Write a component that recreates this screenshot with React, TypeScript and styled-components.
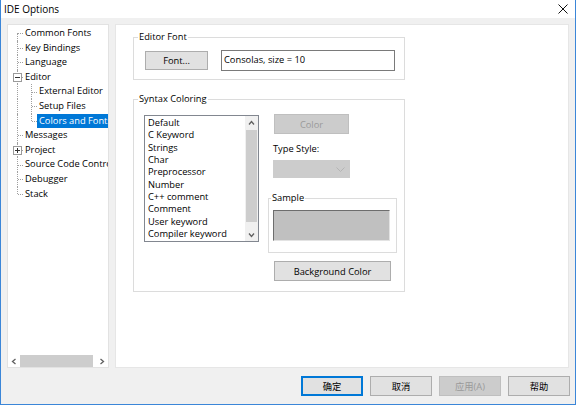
import React from 'react';
import styled, { createGlobalStyle } from 'styled-components';

const GlobalStyle = createGlobalStyle`
  html, body {
    margin: 0;
    padding: 0;
    background: #fff;
  }
  body {
    font-family: "Open Sans", "Noto Sans CJK SC", sans-serif;
    font-size: 9.3px;
    color: #000;
  }
  * {
    box-sizing: border-box;
  }
`;

const Window = styled.div`
  width: 576px;
  height: 405px;
  display: flex;
  flex-direction: column;
  border: 1px solid #3b86d8;
  border-top: 0;
  background: #f0f0f0;
`;

const TitleBar = styled.div`
  height: 18px;
  flex: none;
  display: flex;
  align-items: center;
  justify-content: space-between;
  padding: 0 7px 0 3px;
  background: #fff;
  font-size: 10px;
`;

const Body = styled.div`
  flex: 1;
  display: flex;
  flex-direction: column;
  padding: 6px 5px 0 6px;
`;

const Main = styled.div`
  display: grid;
  grid-template-columns: 102px 454px;
  column-gap: 6px;
  height: 344px;
`;

/* ---------- tree ---------- */

const Tree = styled.div`
  background: #fff;
  border: 1px solid #e2e2e2;
  display: flex;
  flex-direction: column;
  overflow: hidden;
`;

const TreeRows = styled.div`
  flex: 1;
  padding-top: 1px;
  overflow: hidden;
`;

const Row = styled.div`
  height: 14.6px;
  display: flex;
  align-items: stretch;
  white-space: nowrap;
`;

type Guide = 'first' | 'pipe' | 'tee' | 'elbow';

const GuideCell = styled.span<{ $kind: Guide }>`
  position: relative;
  flex: none;
  width: 14px;

  &::before {
    content: '';
    position: absolute;
    left: 9px;
    top: ${(p) => (p.$kind === 'first' ? '50%' : '0')};
    bottom: ${(p) => (p.$kind === 'elbow' ? '50%' : '0')};
    border-left: 1px dotted #a0a0a0;
  }

  &::after {
    content: '';
    display: ${(p) => (p.$kind === 'pipe' ? 'none' : 'block')};
    position: absolute;
    left: 10px;
    right: -1px;
    top: 50%;
    border-top: 1px dotted #a0a0a0;
  }
`;

const Toggle = styled.svg`
  position: absolute;
  z-index: 1;
  left: 5px;
  top: calc(50% - 4px);
  width: 9px;
  height: 9px;
`;

const NodeLabel = styled.span<{ $selected?: boolean }>`
  margin-left: 1px;
  padding: 0 2px;
  line-height: 14.6px;
  background: ${(p) => (p.$selected ? '#0078d7' : 'transparent')};
  color: ${(p) => (p.$selected ? '#fff' : '#000')};
`;

const HScroll = styled.div`
  height: 12px;
  flex: none;
  display: flex;
  align-items: stretch;
  background: #fff;
`;

const ScrollArrow = styled.span`
  width: 12px;
  flex: none;
  display: flex;
  align-items: center;
  justify-content: center;
`;

const HTrack = styled.span`
  flex: 1;
  display: flex;
  align-items: stretch;
`;

const HThumb = styled.span`
  width: 73px;
  background: #cdcdcd;
`;

/* ---------- right panel ---------- */

const Panel = styled.div`
  background: #fff;
  border: 1px solid #e6e6e6;
  padding: 6px 0 0 17px;
  display: flex;
  flex-direction: column;
  align-items: flex-start;
`;

const Group = styled.fieldset`
  margin: 0;
  min-inline-size: 0;
  border: 1px solid #dcdcdc;
`;

const Legend = styled.legend`
  padding: 0 1px;
  line-height: 12px;
`;

const EditorFontGroup = styled(Group)`
  width: 272px;
  padding: 7px 9px 8px 11px;
  display: flex;
  align-items: center;

  ${Legend} {
    margin-left: -7px;
  }
`;

const SyntaxGroup = styled(Group)`
  width: 272px;
  margin-top: 13px;
  padding: 10px 0 10px 10px;
  display: flex;
  align-items: flex-start;

  ${Legend} {
    margin-left: -6px;
  }
`;

const SampleGroup = styled(Group)`
  width: 129px;
  margin-top: 14px;
  padding: 6px 6px 11px 4px;

  ${Legend} {
    margin-left: -2px;
  }
`;

const Button = styled.button<{ $w: number; $h?: number; $disabled?: boolean; $primary?: boolean }>`
  width: ${(p) => p.$w}px;
  height: ${(p) => p.$h ?? 20}px;
  padding: 0;
  margin: 0;
  font: inherit;
  background: ${(p) => (p.$disabled ? '#cccccc' : '#e1e1e1')};
  border: 1px solid ${(p) => (p.$primary ? '#0078d7' : p.$disabled ? '#bfbfbf' : '#adadad')};
  box-shadow: ${(p) => (p.$primary ? 'inset 0 0 0 1px #0078d7' : 'none')};
  color: ${(p) => (p.$disabled ? '#9a9a9a' : '#000')};
  flex: none;
`;

const FontField = styled.div`
  width: 174px;
  height: 21px;
  margin-left: 13px;
  border: 1px solid #7a7a7a;
  background: #fff;
  padding: 2px 0 0 2px;
  line-height: 13px;
`;

const ListBox = styled.div`
  width: 115px;
  height: 127px;
  flex: none;
  border: 1px solid #828790;
  background: #fff;
  display: flex;
`;

const ListItems = styled.div`
  flex: 1;
  padding: 1px 0 0 3px;
  overflow: hidden;
`;

const ListItem = styled.div`
  height: 12.33px;
  line-height: 12.33px;
  white-space: nowrap;
`;

const VScroll = styled.div`
  width: 13px;
  flex: none;
  background: #f0f0f0;
  display: flex;
  flex-direction: column;
`;

const VArrow = styled.span`
  height: 13px;
  display: flex;
  align-items: center;
  justify-content: center;
`;

const VThumb = styled.span`
  height: 92px;
  margin: 1px 1px 0;
  background: #cdcdcd;
`;

const VSpacer = styled.span`
  flex: 1;
`;

const SideColumn = styled.div`
  margin: -1px 0 0 9px;
  display: flex;
  flex-direction: column;
  align-items: flex-start;
`;

const Indented = styled.div<{ $left: number; $top: number }>`
  margin-left: ${(p) => p.$left}px;
  margin-top: ${(p) => p.$top}px;
`;

const FieldLabel = styled.div`
  line-height: 12px;
`;

const Combo = styled.div`
  width: 77px;
  height: 18px;
  background: #cccccc;
  display: flex;
  align-items: center;
  justify-content: flex-end;
  padding-right: 5px;
`;

const SampleBox = styled.div`
  width: 117px;
  height: 31px;
  background: #c0c0c0;
  border-top: 1px solid #6d6d6d;
  border-left: 1px solid #6d6d6d;
  border-right: 1px solid #e3e3e3;
  border-bottom: 1px solid #e3e3e3;
`;

const Footer = styled.div`
  display: flex;
  justify-content: flex-end;
  gap: 7px;
  padding-top: 8px;
`;

/* ---------- data ---------- */

type TreeItem = {
  label: string;
  guides: Guide[];
  toggle?: 'open' | 'closed';
  selected?: boolean;
};

const treeItems: TreeItem[] = [
  { label: 'Common Fonts', guides: ['first'] },
  { label: 'Key Bindings', guides: ['tee'] },
  { label: 'Language', guides: ['tee'] },
  { label: 'Editor', guides: ['tee'], toggle: 'open' },
  { label: 'External Editor', guides: ['pipe', 'tee'] },
  { label: 'Setup Files', guides: ['pipe', 'tee'] },
  { label: 'Colors and Fonts', guides: ['pipe', 'elbow'], selected: true },
  { label: 'Messages', guides: ['tee'] },
  { label: 'Project', guides: ['tee'], toggle: 'closed' },
  { label: 'Source Code Control', guides: ['tee'] },
  { label: 'Debugger', guides: ['tee'] },
  { label: 'Stack', guides: ['elbow'] },
];

const syntaxItems = [
  'Default',
  'C Keyword',
  'Strings',
  'Char',
  'Preprocessor',
  'Number',
  'C++ comment',
  'Comment',
  'User keyword',
  'Compiler keyword',
];

const Chevron = ({ dir }: { dir: 'left' | 'right' | 'up' | 'down' }) => {
  const paths = {
    left: 'M4.5 1 L1.5 3.5 L4.5 6',
    right: 'M1.5 1 L4.5 3.5 L1.5 6',
    up: 'M1 4.5 L3.5 1.5 L6 4.5',
    down: 'M1 1.5 L3.5 4.5 L6 1.5',
  };
  const horiz = dir === 'left' || dir === 'right';
  return (
    <svg width={horiz ? 6 : 7} height={horiz ? 7 : 6} viewBox={horiz ? '0 0 6 7' : '0 0 7 6'}>
      <path d={paths[dir]} fill="none" stroke="#606060" strokeWidth="1.3" />
    </svg>
  );
};

const App = () => {
  return (
    <>
      <GlobalStyle />
      <Window>
        <TitleBar>
          <span>IDE Options</span>
          <svg width="10" height="10" viewBox="0 0 10 10">
            <path d="M0.5 0.5 L9.5 9.5 M9.5 0.5 L0.5 9.5" stroke="#111" strokeWidth="1" />
          </svg>
        </TitleBar>
        <Body>
          <Main>
            <Tree>
              <TreeRows>
                {treeItems.map((item) => (
                  <Row key={item.label}>
                    {item.guides.map((g, i) => (
                      <GuideCell key={i} $kind={g}>
                        {i === 0 && item.toggle && (
                          <Toggle viewBox="0 0 9 9">
                            <rect x="0.5" y="0.5" width="8" height="8" fill="#fff" stroke="#9a9a9a" />
                            <path d="M2 4.5 H7" stroke="#333" />
                            {item.toggle === 'closed' && <path d="M4.5 2 V7" stroke="#333" />}
                          </Toggle>
                        )}
                      </GuideCell>
                    ))}
                    <NodeLabel $selected={item.selected}>{item.label}</NodeLabel>
                  </Row>
                ))}
              </TreeRows>
              <HScroll>
                <ScrollArrow>
                  <Chevron dir="left" />
                </ScrollArrow>
                <HTrack>
                  <HThumb />
                </HTrack>
                <ScrollArrow>
                  <Chevron dir="right" />
                </ScrollArrow>
              </HScroll>
            </Tree>

            <Panel>
              <EditorFontGroup>
                <Legend>Editor Font</Legend>
                <Button $w={63} $h={19}>
                  Font...
                </Button>
                <FontField>Consolas, size = 10</FontField>
              </EditorFontGroup>

              <SyntaxGroup>
                <Legend>Syntax Coloring</Legend>
                <ListBox>
                  <ListItems>
                    {syntaxItems.map((s) => (
                      <ListItem key={s}>{s}</ListItem>
                    ))}
                  </ListItems>
                  <VScroll>
                    <VArrow>
                      <Chevron dir="up" />
                    </VArrow>
                    <VThumb />
                    <VSpacer />
                    <VArrow>
                      <Chevron dir="down" />
                    </VArrow>
                  </VScroll>
                </ListBox>

                <SideColumn>
                  <Indented $left={6} $top={0}>
                    <Button $w={75} $disabled>
                      Color
                    </Button>
                  </Indented>
                  <Indented $left={5} $top={9}>
                    <FieldLabel>Type Style:</FieldLabel>
                  </Indented>
                  <Indented $left={5} $top={5}>
                    <Combo>
                      <svg width="9" height="5" viewBox="0 0 9 5">
                        <path d="M0.5 0.5 L4.5 4.5 L8.5 0.5" fill="none" stroke="#b4b4b4" />
                      </svg>
                    </Combo>
                  </Indented>
                  <SampleGroup>
                    <Legend>Sample</Legend>
                    <SampleBox />
                  </SampleGroup>
                  <Indented $left={6} $top={8}>
                    <Button $w={117}>Background Color</Button>
                  </Indented>
                </SideColumn>
              </SyntaxGroup>
            </Panel>
          </Main>

          <Footer>
            <Button $w={62} $primary>
              确定
            </Button>
            <Button $w={62}>取消</Button>
            <Button $w={62} $disabled>
              应用(A)
            </Button>
            <Button $w={62}>帮助</Button>
          </Footer>
        </Body>
      </Window>
    </>
  );
};

export default App;
